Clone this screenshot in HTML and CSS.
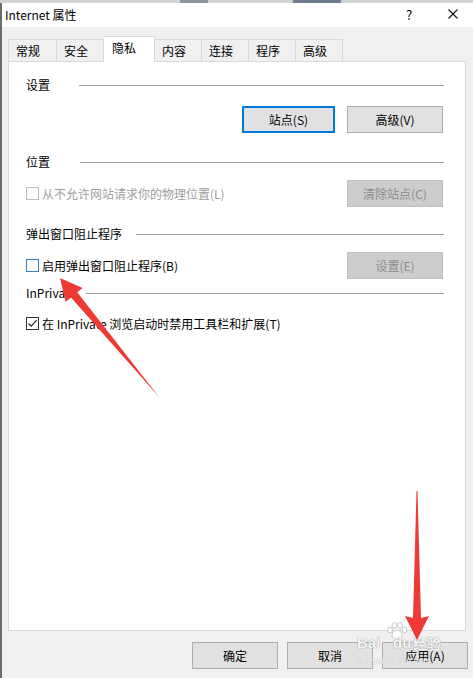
FILE: index.html
```html
<!DOCTYPE html>
<html>
<head>
    <meta charset="utf-8">
    <title>Internet 属性</title>
    <link rel="stylesheet" href="styles.css">
</head>
<body>
    <div class="topstrip"></div>
    <div class="window">
        <div class="titlebar">
            <span class="title">Internet 属性</span>
            <span class="help">?</span>
            <span class="close">
                <svg width="10" height="10" viewBox="0 0 10 10">
                    <path d="M0.5 0.5 L9.5 9.5 M9.5 0.5 L0.5 9.5" stroke="#111" stroke-width="1.1" fill="none"/>
                </svg>
            </span>
        </div>

        <div class="content">
            <div class="tabs">
                <div class="tab first">常规</div>
                <div class="tab">安全</div>
                <div class="tab active">隐私</div>
                <div class="tab">内容</div>
                <div class="tab">连接</div>
                <div class="tab">程序</div>
                <div class="tab">高级</div>
            </div>

            <div class="panel">
                <div class="group-head head-settings">
                    <span class="label">设置</span><span class="line"></span>
                </div>
                <div class="btn-row row-settings">
                    <button class="btn default">站点(S)</button>
                    <button class="btn">高级(V)</button>
                </div>

                <div class="group-head head-location">
                    <span class="label">位置</span><span class="line"></span>
                </div>
                <div class="opt-row row-location">
                    <span class="check disabled"><span class="box"></span>从不允许网站请求你的物理位置(L)</span>
                    <button class="btn disabled">清除站点(C)</button>
                </div>

                <div class="group-head head-popup">
                    <span class="label">弹出窗口阻止程序</span><span class="line"></span>
                </div>
                <div class="opt-row row-popup">
                    <span class="check hover"><span class="box"></span>启用弹出窗口阻止程序(B)</span>
                    <button class="btn disabled">设置(E)</button>
                </div>

                <div class="group-head head-inprivate">
                    <span class="label">InPrivate</span><span class="line"></span>
                </div>
                <div class="opt-row row-inprivate">
                    <span class="check"><span class="box">
                        <svg width="11" height="11" viewBox="0 0 11 11"><path d="M1.5 5.5 L4.2 8.2 L9.6 2.2" stroke="#222" stroke-width="1.2" fill="none"/></svg>
                    </span>在 InPrivate 浏览启动时禁用工具栏和扩展(T)</span>
                </div>
            </div>

            <div class="footer">
                <button class="btn">确定</button>
                <button class="btn">取消</button>
                <button class="btn">应用(A)</button>
            </div>
        </div>
    </div>

    <!-- Baidu jingyan watermark -->
    <div class="watermark">
        <svg class="paw" width="22" height="18" viewBox="0 0 22 18">
            <g fill="rgba(255,255,255,0.9)" stroke="#b9b9b9" stroke-width="0.8">
                <ellipse cx="4" cy="8" rx="2.4" ry="3"/>
                <ellipse cx="8.5" cy="3.5" rx="2.4" ry="3"/>
                <ellipse cx="14" cy="3.5" rx="2.4" ry="3"/>
                <ellipse cx="18.5" cy="8" rx="2.4" ry="3"/>
                <path d="M11 8 C7 8 5 13 6.5 15.5 C8 17.5 14 17.5 15.5 15.5 C17 13 15 8 11 8 Z"/>
            </g>
        </svg>
        <span class="wm-text wm-bai">Bai</span><span class="wm-text wm-du">du</span><span class="wm-text wm-jy">经验</span>
        <div class="wm-url">jingyan.baidu.com</div>
    </div>

    <!-- red annotation arrows -->
    <svg class="arrows" width="473" height="678" viewBox="0 0 473 678">
        <polygon fill="#ee3a34" points="60,278 82.6,287.9 77.2,292.3 159.5,397.5 71,297.5 65.6,301.9"/>
        <polygon fill="#ee3a34" points="416.5,491 417.5,491 421,618 429,616 417,640 405,616 413,618"/>
    </svg>
</body>
</html>
```

FILE: styles.css
```css
body { margin: 0; width: 473px; height: 678px; overflow: hidden; position: relative; background: #f0f0f0; font-family: "Noto Sans CJK SC", "Noto Sans", sans-serif; font-size: 12px; color: #000; }

.topstrip { height: 3px; background: linear-gradient(90deg, #d2d5d8 0, #d2d5d8 38%, #8e96a0 38%, #8e96a0 44%, #d2d5d8 44%, #d2d5d8 62%, #6f7d90 62%, #6f7d90 72%, #d2d5d8 72%); }
.window { box-sizing: border-box; height: 675px; border-left: 2px solid #6d6d6d; }

.titlebar { box-sizing: border-box; display: flex; align-items: center; height: 24px; padding: 0 0 2px 3px; background: #fff; }
.titlebar .title { flex: 1; font-size: 12px; }
.titlebar .help { width: 20px; margin-right: 14px; text-align: center; font-size: 13px; }
.titlebar .close { width: 40px; display: flex; justify-content: center; }

.content { padding: 9px 7px 0 6px; }

.tabs { display: flex; align-items: flex-end; height: 25px; position: relative; z-index: 1; }
.tab { box-sizing: border-box; width: 47px; height: 22px; line-height: 21px; padding-left: 7px; background: #f0f0f0; border: 1px solid #d9d9d9; border-left: none; border-bottom: none; }
.tab.first { width: 49px; border-left: 1px solid #d9d9d9; }
.tab.active { width: 51px; height: 26px; margin-bottom: -1px; line-height: 22px; padding-left: 8px; background: #fff; }

.panel { box-sizing: border-box; height: 570px; border: 1px solid #d9d9d9; background: #fff; padding: 15px 21px 0 17px; }

.group-head { display: flex; align-items: center; height: 16px; line-height: 16px; }
.group-head .line { flex: 1; height: 0; border-top: 1px solid #a0a0a0; }
.head-settings .label { width: 53px; }
.head-location { margin-top: 21px; }
.head-location .label { width: 54px; }
.head-popup { margin-top: 19px; }
.head-popup .label { width: 110px; }
.head-inprivate { margin-top: 6px; }
.head-inprivate .label { width: 60px; }

.btn { box-sizing: border-box; width: 96px; height: 27px; padding: 0; background: #e1e1e1; border: 1px solid #adadad; font: inherit; color: #000; line-height: 25px; }
.btn.default { width: 93px; border: 2px solid #0078d7; line-height: 23px; }
.btn.disabled { background: #cccccc; border-color: #bfbfbf; color: #8c8c8c; }

.btn-row { display: flex; justify-content: flex-end; gap: 12px; margin-top: 13px; padding-right: 1px; }

.opt-row { display: flex; align-items: center; justify-content: space-between; height: 27px; margin-top: 10px; padding-right: 1px; }
.row-inprivate { height: 16px; margin-top: 14px; }

.check { display: flex; align-items: center; gap: 3px; }
.check .box { box-sizing: border-box; width: 13px; height: 13px; display: flex; align-items: center; justify-content: center; border: 1px solid #333; background: #fff; }
.check.disabled { color: #9e9e9e; }
.check.disabled .box { border-color: #bcbcbc; }
.check.hover .box { border-color: #2f7fc8; }

.footer { display: flex; justify-content: flex-end; gap: 9px; margin-top: 11px; margin-right: -2px; }
.footer .btn { width: 86px; }

.watermark { position: absolute; left: 356px; top: 622px; width: 100px; height: 46px; pointer-events: none; }
.watermark .paw { position: absolute; left: 30px; top: 0; }
.wm-text { position: absolute; top: 14px; line-height: 14px; font-family: "Liberation Sans", sans-serif; font-weight: bold; font-size: 15px; color: rgba(255, 255, 255, 0.92); text-shadow: 0 0 1px #9a9a9a, 0 0 1px #9a9a9a; }
.wm-bai { left: 1px; }
.wm-du { left: 37px; }
.wm-jy { left: 57px; font-family: "Noto Sans CJK SC", sans-serif; font-size: 14px; }
.wm-url { position: absolute; left: 2px; top: 34px; line-height: 10px; font-family: "Liberation Sans", sans-serif; font-size: 9px; color: rgba(255, 255, 255, 0.85); text-shadow: 0 0 1px #aaa; }

.arrows { position: absolute; left: 0; top: 0; pointer-events: none; }
```
